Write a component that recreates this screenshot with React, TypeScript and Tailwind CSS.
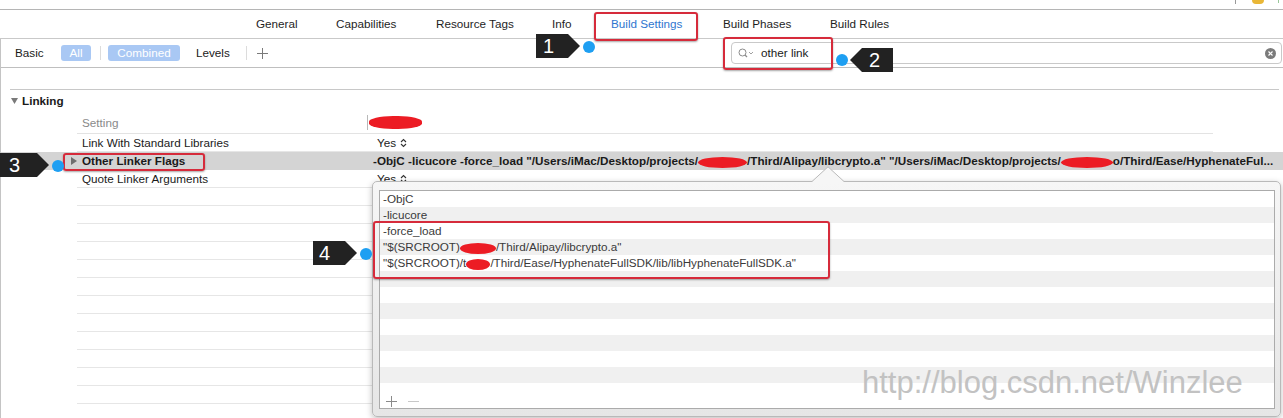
import React from "react";

function UpDown() {
  return (
    <svg width="7" height="10" viewBox="0 0 7 10" className="ml-[4px]">
      <path d="M1 4 L3.5 1.5 L6 4 M1 6 L3.5 8.5 L6 6" fill="none" stroke="#333" strokeWidth="1.1" />
    </svg>
  );
}

function Red({ w, h = 11 }: { w: number; h?: number }) {
  return (
    <span
      className="inline-block rounded-[50%] bg-[#ec1c24] align-middle"
      style={{ width: w, height: h }}
    />
  );
}

function Dot({ left, top }: { left: number; top: number }) {
  return (
    <div
      className="absolute h-[12px] w-[12px] rounded-full bg-[#1e9ff2]"
      style={{ left, top }}
    />
  );
}

function RedBox({ left, top, w, h }: { left: number; top: number; w: number; h: number }) {
  return (
    <div
      className="absolute rounded-[3px] border-2 border-[#d62b3b] shadow-[0_1px_2px_rgba(0,0,0,0.35)]"
      style={{ left, top, width: w, height: h }}
    />
  );
}

const rowLine = "ml-[76px] w-[1136px] h-[18px] border-b border-[#e6e6e6] flex items-center";

export default function App() {
  const popupRows: React.ReactNode[] = [
    "-ObjC",
    "-licucore",
    "-force_load",
    <>
      "$(SRCROOT)
      <Red w={36} h={11} />
      /Third/Alipay/libcrypto.a"
    </>,
    <>
      "$(SRCROOT)/t
      <Red w={24} h={11} />
      /Third/Ease/HyphenateFullSDK/lib/libHyphenateFullSDK.a"
    </>,
    "",
    "",
    "",
    "",
    "",
    "",
    "",
  ];

  return (
    <div className="relative h-[418px] w-[1283px] overflow-hidden bg-white font-['Liberation_Sans',Arial,sans-serif] text-[11.7px] text-[#1a1a1a]">
      {/* top strip */}
      <div className="h-[10px] border-b border-[#b5b5b5]" />

      {/* tabs */}
      <div className="flex h-[29px] items-center border-b border-[#c9c9c9] pl-[256px] text-[#1e1e1e]">
        <span className="w-[80px]">General</span>
        <span className="w-[100px]">Capabilities</span>
        <span className="w-[116px]">Resource Tags</span>
        <span className="w-[59px]">Info</span>
        <span className="w-[112px] text-[#2f76cf]">Build Settings</span>
        <span className="w-[107px]">Build Phases</span>
        <span>Build Rules</span>
      </div>

      <div className="border-l border-[#c4c4c4]">
        {/* filter bar */}
        <div className="flex h-[29px] items-center border-b border-[#bfbfbf]">
          <span className="ml-[14px] w-[46px]">Basic</span>
          <span className="flex h-[16px] w-[30px] items-center justify-center rounded-[3px] bg-[#a9c8f4] text-white">All</span>
          <span className="ml-[9px] h-[14px] w-px bg-[#dcdcdc]" />
          <span className="ml-[7px] flex h-[16px] w-[72px] items-center justify-center rounded-[3px] bg-[#a9c8f4] text-white">Combined</span>
          <span className="ml-[16px] w-[33px]">Levels</span>
          <span className="ml-[17px] h-[14px] w-px bg-[#dcdcdc]" />
          <svg width="11" height="11" viewBox="0 0 11 11" className="ml-[10px]">
            <path d="M5.5 0 V11 M0 5.5 H11" stroke="#7a7a7a" strokeWidth="1" />
          </svg>
          <div className="ml-auto mr-[1px] flex h-[22px] w-[551px] items-center rounded-[4px] border border-[#c9c9c9] bg-white pl-[6px] pr-[5px]">
            <svg width="18" height="10" viewBox="0 0 18 10">
              <circle cx="4.5" cy="4.5" r="3.5" stroke="#8c8c8c" fill="none" strokeWidth="1" />
              <path d="M7 7 L9 9" stroke="#8c8c8c" strokeWidth="1.2" />
              <path d="M11 4 L13 6 L15 4" stroke="#a0a0a0" fill="none" strokeWidth="1" />
            </svg>
            <span className="ml-[5px]">other link</span>
            <span className="ml-auto flex h-[11px] w-[11px] items-center justify-center rounded-full bg-[#7b7b7b]">
              <svg width="5" height="5" viewBox="0 0 5 5">
                <path d="M0.5 0.5 L4.5 4.5 M4.5 0.5 L0.5 4.5" stroke="#fff" strokeWidth="1.2" />
              </svg>
            </span>
          </div>
        </div>

        {/* spacer with line */}
        <div className="ml-[9px] mr-[4px] h-[22px] border-b border-[#c8c8c8]" />

        {/* Linking header */}
        <div className="flex h-[22px] items-center pl-[10px] font-bold">
          <svg width="7" height="6" viewBox="0 0 7 6">
            <path d="M0 0 H7 L3.5 6 Z" fill="#7a7a7a" />
          </svg>
          <span className="ml-[4px]">Linking</span>
        </div>

        {/* Setting header */}
        <div className="ml-[76px] flex h-[22px] w-[1136px] items-center border-b border-[#e3e3e3]">
          <span className="w-[290px] pl-[5px] text-[#8a8a8a]">Setting</span>
          <span className="h-[15px] w-px bg-[#b8b8b8]" />
          <span className="ml-[1px] h-[13px] w-[53px] rounded-[45%] bg-[#ec1c24]" />
        </div>

        {/* Link With Standard Libraries */}
        <div className={rowLine}>
          <span className="w-[296px] pl-[5px]">Link With Standard Libraries</span>
          <span className="flex items-center pl-[4px]">
            Yes
            <UpDown />
          </span>
        </div>

        {/* Other Linker Flags */}
        <div className="flex h-[18px] items-center overflow-hidden whitespace-nowrap bg-[#d4d4d4] pl-[70px] font-bold">
          <svg width="6" height="8" viewBox="0 0 6 8" className="shrink-0">
            <path d="M0 0 L6 4 L0 8 Z" fill="#6e6e6e" />
          </svg>
          <span className="ml-[5px] w-[291px] shrink-0">Other Linker Flags</span>
          <span className="shrink-0">
            -ObjC -licucore -force_load "/Users/iMac/Desktop/projects/
            <Red w={49} />
            /Third/Alipay/libcrypto.a" "/Users/iMac/Desktop/projects/
            <Red w={52} />
            o/Third/Ease/HyphenateFul...
          </span>
        </div>

        {/* Quote Linker Arguments */}
        <div className={rowLine}>
          <span className="w-[296px] pl-[5px]">Quote Linker Arguments</span>
          <span className="flex items-center pl-[4px]">
            Yes
            <UpDown />
          </span>
        </div>

        {Array.from({ length: 13 }).map((_, i) => (
          <div key={i} className={rowLine} />
        ))}
      </div>

      {/* popup */}
      <div className="absolute left-[372px] top-[181px] flex h-[236px] w-[909px] rounded-[5px] border border-[#b9b9b9] bg-linear-to-b from-[#f6f6f6] to-[#e6e6e6] pb-[7px] pl-[6px] pr-[5px] pt-[8px] shadow-[0_2px_6px_rgba(0,0,0,0.25)]">
        <div className="flex flex-1 flex-col border border-[#ababab] bg-white text-[#3a3a3a]">
          {popupRows.map((r, i) => (
            <div
              key={i}
              className={
                i % 2 === 1
                  ? "flex h-[16px] shrink-0 items-center whitespace-nowrap bg-[#f0f0f0] pl-[3px]"
                  : "flex h-[16px] shrink-0 items-center whitespace-nowrap bg-white pl-[3px]"
              }
            >
              <span>{r}</span>
            </div>
          ))}
          <div className="flex flex-1 items-end gap-[11px] pb-[1px] pl-[6px]">
            <svg width="11" height="11" viewBox="0 0 11 11">
              <path d="M5.5 0 V11 M0 5.5 H11" stroke="#8a8a8a" strokeWidth="1" />
            </svg>
            <svg width="11" height="11" viewBox="0 0 11 11">
              <path d="M0 5.5 H11" stroke="#c8c8c8" strokeWidth="1" />
            </svg>
          </div>
        </div>
      </div>

      {/* popup arrow */}
      <svg width="32" height="18" viewBox="0 0 32 18" className="absolute left-[812px] top-[166px]">
        <path d="M0 15.5 L16 0.8 L32 15.5 V18 H0 Z" fill="#f6f6f6" />
        <path d="M0 15.5 L16 0.8 L32 15.5" fill="none" stroke="#b9b9b9" strokeWidth="1" />
      </svg>

      {/* watermark */}
      <div className="absolute left-[862px] top-[367px] whitespace-nowrap text-[31px] leading-[31px] text-[#c2c2c2]">
        http://blog.csdn.net/Winzlee
      </div>

      {/* top-right doodads */}
      <div className="absolute left-[1235px] top-0 h-[4px] w-px bg-[#9a9a9a]" />
      <div className="absolute left-[1252px] top-0 h-[4px] w-[12px] rounded-b-[4px] bg-[#e9b737]" />
      <div className="absolute left-[1278px] top-0 h-[3px] w-px bg-[#9ac79a]" />

      {/* red highlight boxes */}
      <RedBox left={594} top={12} w={104} h={29} />
      <RedBox left={723} top={37} w={110} h={33} />
      <RedBox left={63} top={153} w={142} h={18} />
      <RedBox left={373} top={221} w={457} h={58} />

      {/* badges */}
      <div className="absolute left-[536px] top-[34px] h-[24px] w-[44px] bg-[#222] pl-[7px] text-[20px] leading-[24px] text-white [clip-path:polygon(0_0,32px_0,44px_50%,32px_100%,0_100%)]">
        1
      </div>
      <div className="absolute left-[850px] top-[48px] h-[24px] w-[43px] bg-[#222] pl-[19px] text-[20px] leading-[24px] text-white [clip-path:polygon(12px_0,100%_0,100%_100%,12px_100%,0_50%)]">
        2
      </div>
      <div className="absolute left-0 top-[153px] h-[24px] w-[49px] bg-[#222] pl-[9px] text-[20px] leading-[24px] text-white [clip-path:polygon(0_0,37px_0,49px_50%,37px_100%,0_100%)]">
        3
      </div>
      <div className="absolute left-[313px] top-[241px] h-[24px] w-[44px] bg-[#222] pl-[6px] text-[20px] leading-[24px] text-white [clip-path:polygon(0_0,32px_0,44px_50%,32px_100%,0_100%)]">
        4
      </div>

      <Dot left={583} top={41} />
      <Dot left={836} top={54} />
      <Dot left={52} top={160} />
      <Dot left={360} top={248} />
    </div>
  );
}
